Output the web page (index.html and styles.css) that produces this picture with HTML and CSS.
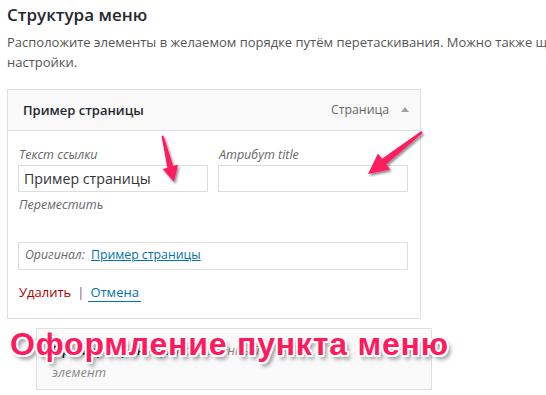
FILE: index.html
```html
<!DOCTYPE html>
<html lang="ru">
<head>
<meta charset="utf-8">
<title>Структура меню</title>
<link rel="stylesheet" href="styles.css">
</head>
<body>
<div class="page">
  <h2 class="title">Структура меню</h2>
  <p class="desc">Расположите элементы в желаемом порядке путём перетаскивания. Можно также щёлкнуть на стрелку справа от элемента, чтобы открыть дополнительные<br>настройки.</p>
  <ul class="menu">
    <li class="item">
      <div class="item-bar">
        <span class="item-title">Пример страницы</span>
        <span class="item-controls"><span class="item-type">Страница</span><span class="toggle"></span></span>
      </div>
      <div class="item-settings">
        <div class="fields">
          <label class="field">
            <span class="label">Текст ссылки</span>
            <span class="input">Пример страницы</span>
          </label>
          <label class="field">
            <span class="label">Атрибут title</span>
            <span class="input"></span>
          </label>
        </div>
        <div class="move">Переместить</div>
        <div class="original"><span class="orig-label">Оригинал:</span> <a class="orig-link" href="#">Пример страницы</a></div>
        <div class="actions"><a class="delete" href="#">Удалить</a><span class="sep">|</span><a class="cancel" href="#">Отмена</a></div>
      </div>
    </li>
    <li class="item sub">
      <div class="sub-bar">
        <div class="sub-title">Пример страницы <span class="sub-note">подчинённый</span></div>
        <div class="sub-note">элемент</div>
      </div>
    </li>
  </ul>
</div>
<svg class="arrows" width="546" height="395" viewBox="0 0 546 395">
  <defs>
    <filter id="sh" x="-50%" y="-50%" width="200%" height="200%">
      <feDropShadow dx="1.5" dy="2" stdDeviation="1.2" flood-color="#000" flood-opacity="0.45"/>
    </filter>
  </defs>
  <polygon filter="url(#sh)" fill="#ff1a5e" points="161.5,136.2 163.5,135.6 173.2,166.1 178,164.8 174,182 162.6,169 167.4,167.7"/>
  <polygon filter="url(#sh)" fill="#ff1a5e" points="421.3,131.1 422.7,133 386.2,164.3 390.2,169.4 368,174 378,153.6 382,158.7"/>
</svg>
<div class="caption">Оформление пункта меню</div>
</body>
</html>
```

FILE: styles.css
```css
html, body {
  margin: 0;
  padding: 0;
  background: #fff;
  overflow: hidden;
}
body {
  width: 546px;
  height: 395px;
  position: relative;
  font-family: "Open Sans", "Noto Sans", sans-serif;
  color: #444;
}
.page {
  padding: 5px 0 0 7px;
}
.title {
  margin: 0;
  font-size: 17px;
  line-height: 20px;
  font-weight: 600;
  color: #23282d;
}
.desc {
  margin: 7px 0 0;
  font-size: 13px;
  line-height: 20px;
  color: #555;
  white-space: nowrap;
}
.menu {
  list-style: none;
  margin: 17px 0 0;
  padding: 0;
}
.item {
  width: 412px;
  border: 1px solid #dfdfdf;
  background: #fff;
}
.item-bar {
  height: 40px;
  display: flex;
  align-items: center;
  justify-content: space-between;
  padding: 0 11px 0 15px;
  background: #f9f9f9;
  border-bottom: 1px solid #dfdfdf;
  font-size: 13px;
  line-height: 20px;
}
.item-title {
  font-weight: 600;
  color: #23282d;
}
.item-controls {
  display: flex;
  align-items: center;
  gap: 12px;
}
.item-type {
  color: #666;
  font-size: 12.3px;
}
.toggle {
  width: 0;
  height: 0;
  border-left: 4px solid transparent;
  border-right: 4px solid transparent;
  border-bottom: 5px solid #a0a5aa;
  margin-top: -2px;
}
.item-settings {
  padding: 14px 12px 16px 10px;
}
.fields {
  display: grid;
  grid-template-columns: 190px 190px;
  column-gap: 10px;
}
.field {
  display: flex;
  flex-direction: column;
}
.label, .move, .orig-label {
  font-style: italic;
  color: #666;
  font-size: 12.5px;
  line-height: 20px;
}
.label {
  padding-left: 1px;
}
.input {
  box-sizing: border-box;
  height: 27px;
  border: 1px solid #ddd;
  padding: 0 5px;
  font-size: 14.2px;
  line-height: 25px;
  color: #333;
}
.move {
  margin-top: 3px;
  padding-left: 1px;
}
.original {
  margin-top: 27px;
  border: 1px solid #dfdfdf;
  padding: 2px 6px 4px;
  font-size: 12.3px;
  line-height: 20px;
}
.orig-label {
  font-size: 12.3px;
}
.orig-link {
  color: #0073aa;
  text-decoration: underline;
  margin-left: 3px;
}
.actions {
  margin-top: 12px;
  font-size: 13px;
  line-height: 20px;
  display: flex;
  align-items: center;
  padding-left: 1px;
}
.delete {
  color: #a00;
  text-decoration: none;
}
.sep {
  color: #8a4e7a;
  margin: 0 4px 0 6px;
}
.cancel {
  color: #0073aa;
  text-decoration: none;
  border-bottom: 1px solid #0073aa;
  line-height: 18px;
  padding: 0 2px;
}
.item.sub {
  margin: 9px 0 0 29px;
  width: 394px;
  background: #fafafa;
}
.sub-bar {
  height: 60px;
  padding: 10px 15px 0;
  box-sizing: border-box;
  font-size: 13px;
  line-height: 22px;
}
.sub-title {
  font-weight: 600;
  color: #23282d;
}
.sub-note {
  font-style: italic;
  font-weight: 400;
  color: #888;
}
.arrows {
  position: absolute;
  left: 0;
  top: 0;
  pointer-events: none;
}
.caption {
  position: absolute;
  left: 10px;
  top: 328px;
  font-family: "Liberation Sans", Arial, sans-serif;
  font-weight: 700;
  font-size: 32px;
  line-height: 32px;
  letter-spacing: 0.8px;
  color: #ff1a5e;
  white-space: nowrap;
  text-shadow:
    2px 0 0 #fff, -2px 0 0 #fff, 0 2px 0 #fff, 0 -2px 0 #fff,
    1.5px 1.5px 0 #fff, -1.5px 1.5px 0 #fff, 1.5px -1.5px 0 #fff, -1.5px -1.5px 0 #fff,
    3px 4px 4px rgba(0,0,0,0.5);
}
```
